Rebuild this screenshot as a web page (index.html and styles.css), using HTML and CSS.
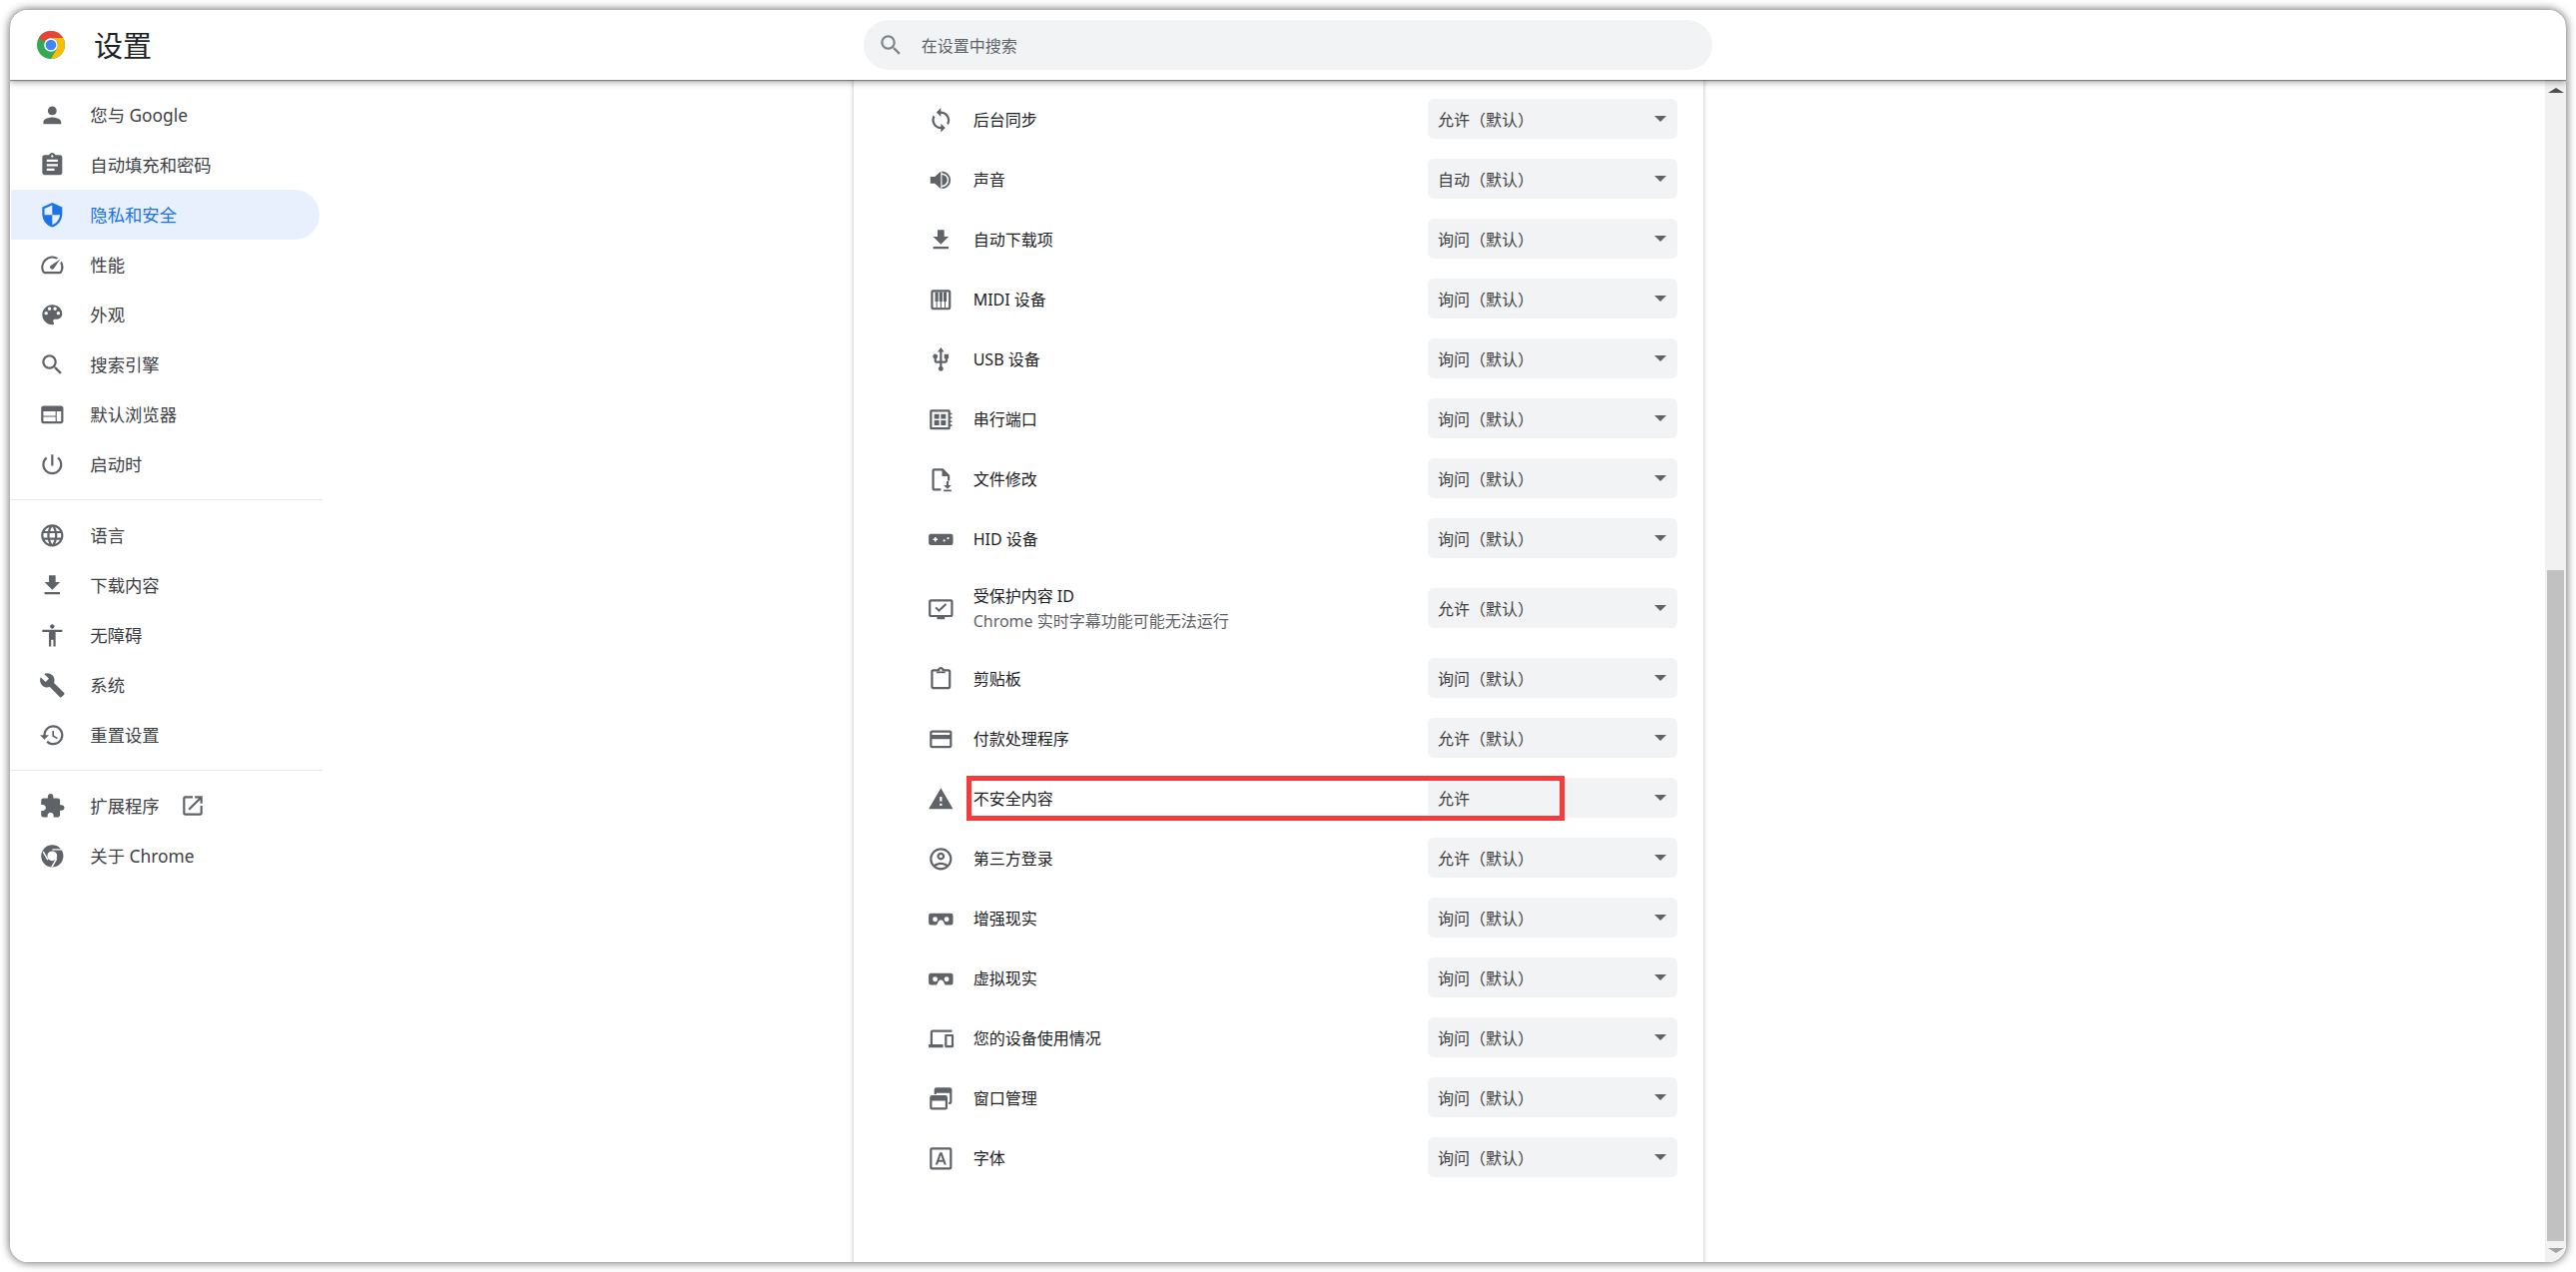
FILE: index.html
```html
<!DOCTYPE html>
<html lang="zh-CN">
<head>
<meta charset="utf-8">
<title>设置</title>
<link rel="stylesheet" href="styles.css">
</head>
<body>
<div class="window">
  <header class="topbar">
    <div class="brand">
      <svg class="logo" viewBox="0 0 28 28">
        <circle cx="14" cy="14" r="14" fill="#34a853"/>
        <path d="M14 0A14 14 0 0 1 26.1 7H14a7 7 0 0 0-6.1 3.5L1.900 7A14 14 0 0 1 14 0z" fill="#ea4335"/>
        <path d="M26.100 7A14 14 0 0 1 14 28l6.100-10.500A7 7 0 0 0 20 10.500 7 7 0 0 0 14 7z" fill="#fbbc04"/>
        <circle cx="14" cy="14" r="6.800" fill="#fff"/>
        <circle cx="14" cy="14" r="5.300" fill="#4285f4"/>
      </svg>
      <h1 class="title">设置</h1>
    </div>
    <div class="search">
      <svg class="search-icon" viewBox="0 0 24 24"><path d="M15.5 14h-.79l-.28-.27C15.41 12.59 16 11.11 16 9.5 16 5.91 13.09 3 9.5 3S3 5.91 3 9.5 5.91 16 9.5 16c1.61 0 3.09-.59 4.23-1.57l.27.28v.79l5 4.99L20.49 19l-4.99-5zm-6 0C7.01 14 5 11.99 5 9.5S7.01 5 9.5 5 14 7.01 14 9.5 11.99 14 9.5 14z"/></svg>
      <span class="search-text">在设置中搜索</span>
    </div>
  </header>
  <div class="content">
    <nav class="sidebar">
      <a class="nav-item"><svg class="ic" viewBox="0 0 24 24"><path d="M12 12c2.21 0 4-1.79 4-4s-1.79-4-4-4-4 1.79-4 4 1.79 4 4 4zm0 2c-2.67 0-8 1.34-8 4v2h16v-2c0-2.66-5.33-4-8-4z"/></svg><span>您与 Google</span></a>
      <a class="nav-item"><svg class="ic" viewBox="0 0 24 24"><path d="M19 3h-4.18C14.4 1.84 13.3 1 12 1c-1.3 0-2.4.84-2.82 2H5c-1.1 0-2 .9-2 2v14c0 1.1.9 2 2 2h14c1.1 0 2-.9 2-2V5c0-1.1-.9-2-2-2zm-7 0c.55 0 1 .45 1 1s-.45 1-1 1-1-.45-1-1 .45-1 1-1zm2 14H7v-2h7v2zm3-4H7v-2h10v2zm0-4H7V7h10v2z"/></svg><span>自动填充和密码</span></a>
      <a class="nav-item active"><svg class="ic" viewBox="0 0 24 24"><path d="M12 1L3 5v6c0 5.55 3.84 10.74 9 12 5.16-1.26 9-6.45 9-12V5l-9-4zm0 10.99h7c-.53 4.12-3.28 7.79-7 8.94V12H5V6.3l7-3.11v8.8z"/></svg><span>隐私和安全</span></a>
      <a class="nav-item"><svg class="ic" viewBox="0 0 24 24"><path d="M20.38 8.57l-1.23 1.85a8 8 0 0 1-.22 7.58H5.07A8 8 0 0 1 15.58 6.85l1.85-1.23A10 10 0 0 0 3.35 19a2 2 0 0 0 1.72 1h13.85a2 2 0 0 0 1.74-1 10 10 0 0 0-.27-10.44zm-9.79 6.84a2 2 0 0 0 2.83 0l5.66-8.49-8.49 5.66a2 2 0 0 0 0 2.83z"/></svg><span>性能</span></a>
      <a class="nav-item"><svg class="ic" viewBox="0 0 24 24"><path d="M12 3c-4.97 0-9 4.03-9 9s4.03 9 9 9c.83 0 1.5-.67 1.5-1.5 0-.39-.15-.74-.39-1.01-.23-.26-.38-.61-.38-.99 0-.83.67-1.5 1.5-1.5H16c2.76 0 5-2.24 5-5 0-4.42-4.03-8-9-8zm-5.5 9c-.83 0-1.5-.67-1.5-1.5S5.67 9 6.5 9 8 9.67 8 10.5 7.33 12 6.5 12zm3-4C8.67 8 8 7.33 8 6.5S8.67 5 9.5 5s1.5.67 1.5 1.5S10.33 8 9.5 8zm5 0c-.83 0-1.5-.67-1.5-1.5S13.67 5 14.5 5s1.5.67 1.5 1.5S15.33 8 14.5 8zm3 4c-.83 0-1.5-.67-1.5-1.5S16.67 9 17.5 9s1.5.67 1.5 1.5-.67 1.5-1.5 1.5z"/></svg><span>外观</span></a>
      <a class="nav-item"><svg class="ic" viewBox="0 0 24 24"><path d="M15.5 14h-.79l-.28-.27C15.41 12.59 16 11.11 16 9.5 16 5.91 13.09 3 9.5 3S3 5.91 3 9.5 5.91 16 9.5 16c1.61 0 3.09-.59 4.23-1.57l.27.28v.79l5 4.99L20.49 19l-4.99-5zm-6 0C7.01 14 5 11.99 5 9.5S7.01 5 9.5 5 14 7.01 14 9.5 11.99 14 9.5 14z"/></svg><span>搜索引擎</span></a>
      <a class="nav-item"><svg class="ic" viewBox="0 0 24 24"><path d="M20 4H4c-1.11 0-1.99.89-1.99 2L2 18c0 1.11.89 2 2 2h16c1.11 0 2-.89 2-2V6c0-1.11-.89-2-2-2zm-5 14H4v-4h11v4zm0-5H4V9h11v4zm5 5h-4V9h4v9z"/></svg><span>默认浏览器</span></a>
      <a class="nav-item"><svg class="ic" viewBox="0 0 24 24"><path d="M13 3h-2v10h2V3zm4.83 2.17l-1.42 1.42C17.99 7.86 19 9.81 19 12c0 3.87-3.13 7-7 7s-7-3.13-7-7c0-2.19 1.01-4.14 2.58-5.42L6.17 5.17C4.23 6.82 3 9.26 3 12c0 4.97 4.03 9 9 9s9-4.03 9-9c0-2.74-1.23-5.18-3.17-6.83z"/></svg><span>启动时</span></a>
      <div class="nav-divider"></div>
      <a class="nav-item"><svg class="ic" viewBox="0 0 24 24"><path d="M11.99 2C6.47 2 2 6.48 2 12s4.47 10 9.99 10C17.52 22 22 17.52 22 12S17.52 2 11.99 2zm6.93 6h-2.95c-.32-1.25-.78-2.45-1.38-3.56 1.84.63 3.37 1.91 4.33 3.56zM12 4.04c.83 1.2 1.48 2.53 1.91 3.96h-3.82c.43-1.43 1.08-2.76 1.91-3.96zM4.26 14C4.1 13.36 4 12.69 4 12s.1-1.36.26-2h3.38c-.08.66-.14 1.32-.14 2 0 .68.06 1.34.14 2H4.26zm.82 2h2.95c.32 1.25.78 2.45 1.38 3.56-1.84-.63-3.37-1.9-4.33-3.56zm2.95-8H5.08c.96-1.66 2.49-2.93 4.33-3.56C8.81 5.55 8.35 6.75 8.03 8zM12 19.96c-.83-1.2-1.48-2.53-1.91-3.96h3.82c-.43 1.43-1.08 2.76-1.91 3.96zM14.34 14H9.66c-.09-.66-.16-1.32-.16-2 0-.68.07-1.35.16-2h4.68c.09.65.16 1.32.16 2 0 .68-.07 1.34-.16 2zm.25 5.56c.6-1.11 1.06-2.31 1.38-3.56h2.95c-.96 1.65-2.49 2.93-4.33 3.56zM16.36 14c.08-.66.14-1.32.14-2 0-.68-.06-1.34-.14-2h3.38c.16.64.26 1.31.26 2s-.1 1.36-.26 2h-3.38z"/></svg><span>语言</span></a>
      <a class="nav-item"><svg class="ic" viewBox="0 0 24 24"><path d="M19 9h-4V3H9v6H5l7 7 7-7zM5 18v2h14v-2H5z"/></svg><span>下载内容</span></a>
      <a class="nav-item"><svg class="ic" viewBox="0 0 24 24"><path d="M12 2c1.1 0 2 .9 2 2s-.9 2-2 2-2-.9-2-2 .9-2 2-2zm9 7h-6v13h-2v-6h-2v6H9V9H3V7h18v2z"/></svg><span>无障碍</span></a>
      <a class="nav-item"><svg class="ic" viewBox="0 0 24 24"><path d="M22.7 19l-9.1-9.1c.9-2.3.4-5-1.5-6.9-2-2-5-2.4-7.4-1.3L9 6 6 9 1.6 4.7C.4 7.1.9 10.1 2.9 12.1c1.9 1.9 4.6 2.4 6.9 1.5l9.1 9.1c.4.4 1 .4 1.4 0l2.3-2.3c.5-.4.5-1.1.1-1.4z"/></svg><span>系统</span></a>
      <a class="nav-item"><svg class="ic" viewBox="0 0 24 24"><path d="M13 3c-4.97 0-9 4.03-9 9H1l3.89 3.89.07.14L9 12H6c0-3.87 3.13-7 7-7s7 3.13 7 7-3.13 7-7 7c-1.93 0-3.68-.79-4.94-2.06l-1.42 1.42C8.27 19.99 10.51 21 13 21c4.97 0 9-4.03 9-9s-4.03-9-9-9zm-1 5v5l4.28 2.54.72-1.21-3.5-2.08V8H12z"/></svg><span>重置设置</span></a>
      <div class="nav-divider"></div>
      <a class="nav-item"><svg class="ic" viewBox="0 0 24 24"><path d="M20.5 11H19V7c0-1.1-.9-2-2-2h-4V3.5C13 2.12 11.88 1 10.5 1S8 2.12 8 3.5V5H4c-1.1 0-1.99.9-1.99 2v3.8H3.5c1.49 0 2.7 1.21 2.7 2.7s-1.21 2.7-2.7 2.7H2V20c0 1.1.9 2 2 2h3.8v-1.5c0-1.49 1.21-2.7 2.7-2.7 1.49 0 2.7 1.21 2.7 2.7V22H17c1.1 0 2-.9 2-2v-4h1.5c1.38 0 2.5-1.12 2.5-2.5S21.88 11 20.5 11z"/></svg><span>扩展程序</span><svg class="ext" viewBox="0 0 24 24"><path d="M19 19H5V5h7V3H5c-1.11 0-2 .9-2 2v14c0 1.1.89 2 2 2h14c1.1 0 2-.9 2-2v-7h-2v7zM14 3v2h3.59l-9.83 9.83 1.41 1.41L19 6.41V10h2V3h-7z"/></svg></a>
      <a class="nav-item"><svg class="ic" viewBox="0 0 24 24"><path fill-rule="evenodd" d="M12 2a10 10 0 1 1 0 20 10 10 0 0 1 0-20zm0 5.6a4.4 4.4 0 1 0 0 8.8 4.4 4.4 0 0 0 0-8.8z"/><path class="slit" d="M12 6.200h8.600M8 15.400L3.700 8M15.900 14.600L11.600 22"/></svg><span>关于 Chrome</span></a>
    </nav>
    <main class="main">
      <section class="card">
        <div class="row"><svg class="ic" viewBox="0 0 24 24"><path d="M12 4V1L8 5l4 4V6c3.310 0 6 2.690 6 6 0 1.010-.25 1.970-.7 2.800l1.460 1.460C19.540 15.030 20 13.570 20 12c0-4.420-3.580-8-8-8zm0 14c-3.310 0-6-2.690-6-6 0-1.010.25-1.970.7-2.800L5.240 7.740C4.460 8.970 4 10.430 4 12c0 4.420 3.580 8 8 8v3l4-4-4-4v3z"/></svg><span class="label">后台同步</span><div class="select">允许（默认）</div></div>
        <div class="row"><svg class="ic" viewBox="0 0 24 24"><path d="M2.500 9v6h4l5.500 5V4L6.500 9h-4zM13 7.200a4.800 4.800 0 0 1 0 9.600z"/><path class="arc" d="M13 5a7 7 0 0 1 0 14"/></svg><span class="label">声音</span><div class="select">自动（默认）</div></div>
        <div class="row"><svg class="ic" viewBox="0 0 24 24"><path d="M19 9h-4V3H9v6H5l7 7 7-7zM5 18v2h14v-2H5z"/></svg><span class="label">自动下载项</span><div class="select">询问（默认）</div></div>
        <div class="row"><svg class="ic" viewBox="0 0 24 24"><path d="M5 3h14a2 2 0 0 1 2 2v14a2 2 0 0 1-2 2H5a2 2 0 0 1-2-2V5a2 2 0 0 1 2-2z"/><path class="white" d="M5 5h14v14H5z"/><path d="M6.800 5h2.800v8.500H8.700V19h-.9v-5.500h-1zM10.600 5h2.800v8.500h-.9V19h-1v-5.500h-.9zM14.400 5h2.800v8.500h-1V19h-.9v-5.500h-.9z"/></svg><span class="label">MIDI 设备</span><div class="select">询问（默认）</div></div>
        <div class="row"><svg class="ic" viewBox="0 0 24 24"><path d="M15 7v4h1v2h-3V5h2l-3-4-3 4h2v8H8v-2.070c.7-.37 1.200-1.080 1.200-1.930 0-1.210-.99-2.200-2.200-2.200-1.210 0-2.200.99-2.200 2.200 0 .85.5 1.560 1.200 1.930V13c0 1.110.89 2 2 2h3v3.050c-.71.37-1.200 1.100-1.200 1.950 0 1.220.99 2.200 2.200 2.200 1.210 0 2.200-.98 2.200-2.200 0-.85-.49-1.580-1.200-1.950V15h3c1.110 0 2-.89 2-2v-2h1V7h-4z"/></svg><span class="label">USB 设备</span><div class="select">询问（默认）</div></div>
        <div class="row"><svg class="ic" viewBox="0 0 24 24"><path fill-rule="evenodd" d="M3.500 3H19a1.500 1.500 0 0 1 1.500 1.500V6H22v1.500h-1.500v2H22V11h-1.500v2H22v1.500h-1.500v2H22V18h-1.500v1.500A1.500 1.500 0 0 1 19 21H3.500A1.500 1.500 0 0 1 2 19.500v-15A1.500 1.500 0 0 1 3.500 3zM4 5v14h14.500V5H4z"/><path d="M6 7h4.500v4.300H6zM12 7h4.500v4.300H12zM6 12.700h4.500V17H6zM12 12.700h4.500V17H12z"/></svg><span class="label">串行端口</span><div class="select">询问（默认）</div></div>
        <div class="row"><svg class="ic" viewBox="0 0 24 24"><path d="M6 2h8l6 6v5h-2V9h-5V4H6v16h6v2H6a2 2 0 0 1-2-2V4a2 2 0 0 1 2-2z"/><path d="M17 13.500h2v3.500h2.500L18 20.500 14.500 17H17zM14.500 21.200h7V22.800h-7z"/></svg><span class="label">文件修改</span><div class="select">询问（默认）</div></div>
        <div class="row"><svg class="ic" viewBox="0 0 24 24"><path fill-rule="evenodd" d="M3 7h18a2 2 0 0 1 2 2v6a2 2 0 0 1-2 2H3a2 2 0 0 1-2-2V9a2 2 0 0 1 2-2zm3.300 3v1.300H5v1.400h1.300V14h1.400v-1.300H9v-1.400H7.700V10H6.300zm8.700 2a1 1 0 1 0 0 2 1 1 0 0 0 0-2zm3.500-2a1 1 0 1 0 0 2 1 1 0 0 0 0-2z"/></svg><span class="label">HID 设备</span><div class="select">询问（默认）</div></div>
        <div class="row tall"><svg class="ic" viewBox="0 0 24 24"><path d="M21 3H3c-1.110 0-2 .89-2 2v12c0 1.100.89 2 2 2h5.500v2h7v-2H21c1.100 0 1.990-.9 1.990-2L23 5c0-1.110-.9-2-2-2zm0 14H3V5h18v12z"/><path d="M10.300 14.500L6.700 10.900l1.300-1.300 2.300 2.300 5.700-5.400 1.300 1.300z"/></svg><div class="label-stack"><span class="label">受保护内容 ID</span><span class="sub">Chrome 实时字幕功能可能无法运行</span></div><div class="select">允许（默认）</div></div>
        <div class="row"><svg class="ic" viewBox="0 0 24 24"><path fill-rule="evenodd" d="M19 3h-4.180C14.400 1.840 13.300 1 12 1c-1.300 0-2.400.84-2.820 2H5c-1.100 0-2 .9-2 2v14c0 1.100.9 2 2 2h14c1.100 0 2-.9 2-2V5c0-1.100-.9-2-2-2zm-7 0c.55 0 1 .45 1 1s-.45 1-1 1-1-.45-1-1 .45-1 1-1zm7 16H5V5h14v14z"/><path d="M8 5h8v1.500H8z"/></svg><span class="label">剪贴板</span><div class="select">询问（默认）</div></div>
        <div class="row"><svg class="ic" viewBox="0 0 24 24"><path d="M20 4H4c-1.110 0-1.990.89-1.990 2L2 18c0 1.110.89 2 2 2h16c1.110 0 2-.89 2-2V6c0-1.110-.89-2-2-2zm0 14H4v-6h16v6zm0-10H4V6h16v2z"/></svg><span class="label">付款处理程序</span><div class="select">允许（默认）</div></div>
        <div class="row"><svg class="ic" viewBox="0 0 24 24"><path d="M1 21h22L12 2 1 21zm12-3h-2v-2h2v2zm0-4h-2v-4h2v4z"/></svg><span class="label">不安全内容</span><div class="select">允许</div><div class="callout"></div></div>
        <div class="row"><svg class="ic" viewBox="0 0 24 24"><path d="M12 2C6.480 2 2 6.480 2 12s4.480 10 10 10 10-4.480 10-10S17.520 2 12 2zM7.350 18.500C8.660 17.560 10.260 17 12 17s3.340.56 4.650 1.500c-1.310.94-2.910 1.500-4.650 1.500s-3.340-.56-4.650-1.500zm10.790-1.380C16.450 15.800 14.320 15 12 15s-4.450.8-6.140 2.120C4.700 15.730 4 13.950 4 12c0-4.420 3.580-8 8-8s8 3.580 8 8c0 1.950-.7 3.730-1.860 5.120zM12 6c-1.930 0-3.500 1.570-3.500 3.500S10.070 13 12 13s3.500-1.570 3.500-3.500S13.930 6 12 6zm0 5c-.83 0-1.500-.67-1.500-1.500S11.170 8 12 8s1.500.67 1.500 1.500S12.830 11 12 11z"/></svg><span class="label">第三方登录</span><div class="select">允许（默认）</div></div>
        <div class="row"><svg class="ic" viewBox="0 0 24 24"><path fill-rule="evenodd" d="M3 7h18a2 2 0 0 1 2 2v6.500a2 2 0 0 1-2 2h-4.500c-.6 0-1-.3-1.200-.8l-1-2.200c-.4-.9-1.300-1.500-2.300-1.500s-1.900.6-2.300 1.500l-1 2.200c-.2.500-.6.800-1.200.8H3a2 2 0 0 1-2-2V9a2 2 0 0 1 2-2zm3.800 3.200a2.200 2.200 0 1 0 0 4.400 2.200 2.200 0 0 0 0-4.400zm10.400 0a2.200 2.200 0 1 0 0 4.400 2.200 2.200 0 0 0 0-4.400z"/></svg><span class="label">增强现实</span><div class="select">询问（默认）</div></div>
        <div class="row"><svg class="ic" viewBox="0 0 24 24"><path fill-rule="evenodd" d="M3 7h18a2 2 0 0 1 2 2v6.500a2 2 0 0 1-2 2h-4.500c-.6 0-1-.3-1.200-.8l-1-2.200c-.4-.9-1.300-1.500-2.300-1.500s-1.900.6-2.300 1.500l-1 2.200c-.2.500-.6.800-1.200.8H3a2 2 0 0 1-2-2V9a2 2 0 0 1 2-2zm3.800 3.200a2.200 2.200 0 1 0 0 4.400 2.200 2.200 0 0 0 0-4.400zm10.400 0a2.200 2.200 0 1 0 0 4.400 2.200 2.200 0 0 0 0-4.400z"/></svg><span class="label">虚拟现实</span><div class="select">询问（默认）</div></div>
        <div class="row"><svg class="ic" viewBox="0 0 24 24"><path d="M4.500 6H22V4H4.500c-1.100 0-2 .9-2 2v11H1v3h13v-3H4.500V6zm18 2h-6c-.55 0-1 .45-1 1v10c0 .55.45 1 1 1h6c.55 0 1-.45 1-1V9c0-.55-.45-1-1-1zm-1 10h-4v-8h4v8z"/></svg><span class="label">您的设备使用情况</span><div class="select">询问（默认）</div></div>
        <div class="row"><svg class="ic" viewBox="0 0 24 24"><path fill-rule="evenodd" d="M4 9h12a2 2 0 0 1 2 2v9a2 2 0 0 1-2 2H4a2 2 0 0 1-2-2v-9a2 2 0 0 1 2-2zm0 5v6h12v-6H4z"/><path d="M8 2h12a2 2 0 0 1 2 2v11a2 2 0 0 1-2 2h-1v-2h1V7H8v1H6V4a2 2 0 0 1 2-2z"/></svg><span class="label">窗口管理</span><div class="select">询问（默认）</div></div>
        <div class="row"><svg class="ic" viewBox="0 0 24 24"><path fill-rule="evenodd" d="M4 2h16a2 2 0 0 1 2 2v16a2 2 0 0 1-2 2H4a2 2 0 0 1-2-2V4a2 2 0 0 1 2-2zm0 2v16h16V4H4z"/><path d="M11 6.500h2l4 11h-2l-.9-2.500H9.900L9 17.500H7zm-.5 6.800h3L12 9z"/></svg><span class="label">字体</span><div class="select">询问（默认）</div></div>
      </section>
    </main>
    <div class="scrollbar">
      <div class="arrow-up"></div>
      <div class="track"><div class="thumb"></div></div>
      <div class="arrow-down"></div>
    </div>
  </div>
</div>
</body>
</html>
```
FILE: styles.css
```css
* { box-sizing: border-box; }
html, body { margin: 0; height: 100%; background: #fff; overflow: hidden; }
body {
  padding: 10px;
  font-family: "Noto Sans", "Noto Sans CJK SC", sans-serif;
  color: #202124;
}
.window {
  position: relative;
  height: 1254px;
  display: flex;
  flex-direction: column;
  background: #fff;
  border-radius: 18px;
  overflow: hidden;
}
body::before {
  content: "";
  position: absolute;
  left: 10px; top: 10px; width: 2560px; height: 1254px;
  border-radius: 18px;
  box-shadow: 0 0 9px 1px rgba(0, 0, 0, .55);
}
.topbar {
  position: relative;
  z-index: 2;
  flex: 0 0 70px;
  display: flex;
  align-items: center;
  background: #fff;
  box-shadow: 0 1px 1px rgba(0,0,0,.35), 0 3px 6px rgba(0,0,0,.3);
}
.brand { width: 855px; display: flex; align-items: center; padding-left: 27px; }
.logo { width: 28px; height: 28px; }
.title { margin: 2px 0 0 29px; font-size: 29px; font-weight: 400; line-height: 40px; color: #202124; }
.search {
  width: 850px;
  height: 50px;
  border-radius: 25px;
  background: #f1f3f4;
  display: flex;
  align-items: center;
  padding-left: 14px;
  color: #5f6368;
  font-size: 16px;
}
.search-icon { width: 26.67px; height: 26.67px; fill: #80868b; }
.search-text { margin-left: 17px; }
.content { flex: 1; display: flex; min-height: 0; }
.sidebar { flex: 0 0 313px; padding-top: 10px; }
.nav-item {
  height: 50px;
  display: flex;
  align-items: center;
  padding-left: 28.7px;
  font-size: 17.33px;
  color: #3c4043;
  border-radius: 0 25px 25px 0;
  width: 310px;
}
.nav-item span { margin-left: 25px; margin-top: -1px; }
.nav-item.active { background: #e8f0fe; color: #1a73e8; margin-left: 1px; padding-left: 27.7px; width: 309px; }
.nav-item.active .ic { fill: #1a73e8; }
.ext { width: 26px; height: 26px; margin-left: 20px; fill: #5f6368; }
.nav-divider { height: 1px; background: #e8eaed; margin: 10px 0 11px; }
.nav-divider + .nav-item { margin-top: -1px; }
.ic { flex: 0 0 26.67px; width: 26.67px; height: 26.67px; fill: #5f6368; }
.slit { stroke: #fff; stroke-width: 1.3; fill: none; }
.arc { stroke: #5f6368; stroke-width: 1.7; fill: none; }
.white { fill: #fff; }
.main { flex: 1; min-width: 0; padding-left: 532px; }
.card {
  width: 851px;
  height: 100%;
  padding-top: 10px;
  background: #fff;
  box-shadow: 0 0 3px 1px rgba(60, 64, 67, .25);
}
.row {
  position: relative;
  height: 60px;
  display: flex;
  align-items: center;
  padding-left: 74px;
  padding-right: 26px;
  font-size: 16px;
}
.row.tall { height: 80px; }
.label { margin-left: 19px; flex: 1; line-height: 25px; }
.label-stack { margin-left: 19px; flex: 1; display: flex; flex-direction: column; }
.label-stack .label { margin-left: 0; flex: none; }
.sub { color: #5f6368; line-height: 25px; }
.select {
  position: relative;
  top: -1px;
  flex: 0 0 250px;
  height: 40px;
  line-height: 42px;
  padding-left: 10px;
  background: #f1f3f4;
  border-radius: 6px;
  color: #3c4043;
}
.select::after {
  content: "";
  position: absolute;
  right: 11px;
  top: 17px;
  border-left: 6px solid transparent;
  border-right: 6px solid transparent;
  border-top: 6px solid #5f6368;
}
.callout {
  position: absolute;
  left: 113px;
  top: 7px;
  width: 599px;
  height: 45px;
  border: 5px solid #f43c3c;
}
.scrollbar {
  flex: 0 0 21px;
  background: #f1f1f1;
  display: flex;
  flex-direction: column;
  align-items: center;
}
.arrow-up, .arrow-down { flex: 0 0 21px; position: relative; width: 100%; }
.arrow-up::after, .arrow-down::after {
  content: "";
  position: absolute;
  left: 2.5px;
  border-left: 8px solid transparent;
  border-right: 8px solid transparent;
}
.arrow-up::after { top: 8px; border-bottom: 5px solid #505050; }
.arrow-down::after { top: 7px; border-top: 5px solid #a3a3a3; }
.track { flex: 1; width: 100%; display: flex; flex-direction: column; justify-content: flex-end; align-items: center; }
.thumb { width: 17px; height: 672px; background: #c1c1c1; }
```
